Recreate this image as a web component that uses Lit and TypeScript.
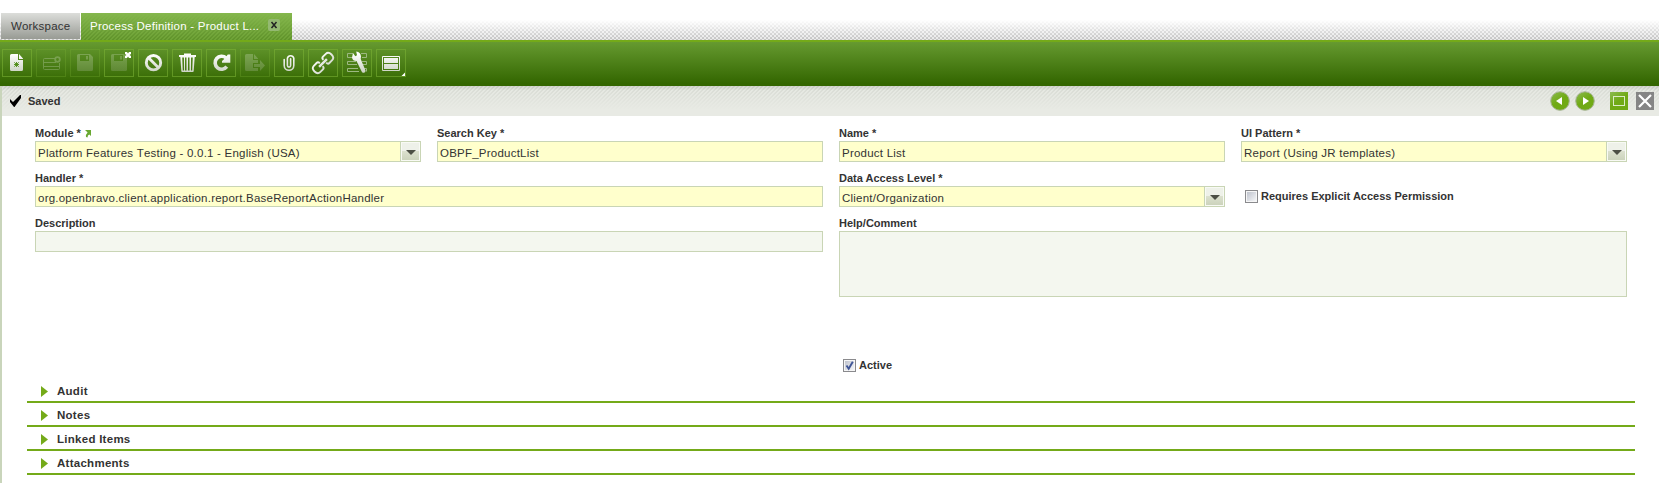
import { LitElement, html, css, svg } from "lit";
import { customElement, property } from "lit/decorators.js";

const DISK = svg`<path fill-rule="evenodd" d="M8.500 5H20l3 3v12.500q0 1.500-1.500 1.500h-13Q7 22 7 20.500v-14Q7 5 8.500 5ZM10 6v6h9V6ZM16 7h2v3.500h-2Z"/>`;
const ICONS: Record<string, unknown> = {
  new: svg`<path fill-rule="evenodd" d="M9.500 5H16v6h5v9.500q0 1.500-1.500 1.500h-10Q8 22 8 20.500v-14Q8 5 9.500 5ZM17 5l4 4.500V10h-4Z"/><path d="M14.500 13v5M12 15.500h5M12.300 13.300l4.400 4.400M12.300 17.700l4.400-4.400" stroke="#4a8a12" stroke-width=".9"/>`,
  row: svg`<g fill="none" stroke="#fff" stroke-width="1"><path d="M19 9.500H8.500q-1 0-1 1v9q0 1 1 1h14q1 0 1-1V14M7.500 13.500H20M7.500 17.500h16"/><circle cx="21.500" cy="10.500" r="2.300" stroke-width="1.800"/></g>`,
  save: DISK,
  saveClose: svg`<g opacity=".2">${DISK}</g><path d="M21 3h2l1 1.500L25 3h2v2l-1.500 1L27 7v2h-2l-1-1.500L23 9h-2V7l1.500-1L21 5Z" fill="#fff"/>`,
  undo: svg`<g fill="none" stroke="url(#g)" stroke-width="2.900"><circle cx="15.500" cy="13.700" r="7.200"/><path d="M10.500 8.700l10 10"/></g>`,
  trash: svg`<path fill-rule="evenodd" d="M12 4.500h7V6h5v2h-1.300l-1 14q0 1-1 1H10.300q-1 0-1-1l-1-14H7V6h5ZM10.200 8.500l.6 13h1.200V8.500ZM13 8.500v13h1.500v-13ZM16 8.500v13h1.500v-13ZM19 8.500v13h1.200l.6-13Z"/>`,
  refresh: svg`<path d="M20.800 17.700A6.500 6.500 0 1 1 20 8.900" fill="none" stroke="url(#g)" stroke-width="3.600"/><path d="M24.300 5.500v8.300H16V12l2.800-2.600 3-3.900Z"/>`,
  export: svg`<path d="M6.500 5H13v6h5v3h-5v5h5v3H6.500Q5 22 5 20.500v-14Q5 5 6.500 5ZM14 5l4 4.500v.5h-4ZM14 15h6v-4l5 5.500-5 5.500v-4h-6Z"/>`,
  clip: svg`<path d="M10.200 10.500v6a4.800 4.800 0 0 0 9.600 0V9.300a3.300 3.300 0 0 0-6.400 0v7.200a1.600 1.600 0 0 0 3.200 0V9.800" fill="none" stroke="url(#g)" stroke-width="1.600" stroke-linecap="round"/>`,
  link: svg`<g transform="rotate(-45 15 14)" fill="none" stroke="url(#g)" stroke-width="1.900"><path d="M12.500 12q0-2.500-2-2.500H6.500Q3 9.500 3 14t3.500 4.500h4q2 0 2-2.500"/><path d="M17.500 12q0-2.500 2-2.500h4Q27 9.500 27 14t-3.500 4.500h-4q-2 0-2-2.500"/><path d="M9.500 14h11" stroke-width="2.400"/></g>`,
  tools: svg`<g fill="none" stroke="#9db882" stroke-width="1"><path d="M11 4.500H5.500v4H11M19 4.500h5.500v4H20M14 12.500H5.500v3H15M20 12.500h4.500v3H21M16 19.500H5.500v3H17M22 19.500h2.500v3"/></g><path d="M11 4l2.300 3.300 1.700-1-.8-3.800q4.400.5 4.800 5l-.3 2.500 4.800 11.500q.3 2-1.500 2.300t-2.200-1L14.500 12q-4 0-4.500-3.500Z"/>`,
  grid: svg`<path d="M6.500 7.500h17v14h-17Z" fill="none" stroke="url(#g)"/><path fill-rule="evenodd" d="M8 9h14v11H8ZM8 14v1h14v-1Z"/><path d="M29 23.500V27h-3.500Z" fill="#fff"/>`,
};

@customElement("ob-tool")
class ObTool extends LitElement {
  @property() icon = "";
  @property({ type: Boolean, reflect: true }) off = false;
  static styles = css`
    :host { display: block; box-sizing: border-box; width: 30px; height: 28px; border: 1px solid rgba(125, 180, 55, .55); }
    :host([off]) { border-color: rgba(125, 180, 55, .28); }
    svg { display: block; margin: -1px; }
    :host([off]) svg { opacity: .22; }
  `;
  render() {
    return html`<svg width="30" height="28" viewBox="0 0 30 28" fill="url(#g)">
      <defs><linearGradient id="g" gradientUnits="userSpaceOnUse" x1="0" y1="5" x2="0" y2="23"><stop stop-color="#fff"/><stop offset="1" stop-color="#ccd3c5"/></linearGradient></defs>
      ${ICONS[this.icon]}</svg>`;
  }
}

@customElement("ob-field")
class ObField extends LitElement {
  @property() label = "";
  @property() value = "";
  @property({ type: Boolean }) required = false;
  @property({ type: Boolean }) picker = false;
  @property({ type: Boolean }) link = false;
  @property({ type: Boolean }) tall = false;
  static styles = css`
    :host { display: block; min-width: 0; }
    .label { display: flex; height: 14px; padding: 1px 0; font: bold 11px/14px "Liberation Sans", Arial, sans-serif; color: #333; white-space: pre; }
    .jump { margin: 4px 0 0 4px; }
    .box { display: flex; box-sizing: border-box; height: 21px; border: 1px solid #c9d5b5; background: #f4f7ef; }
    .req { background: #ffffcc; }
    .tall { height: 66px; }
    .text { flex: 1; padding: 2px 2px 0; font: 11.5px/18px "Liberation Sans", Arial, sans-serif; letter-spacing: .23px; font-kerning: none; color: #333; white-space: nowrap; height: 17px; }
    .pick { box-sizing: border-box; width: 20px; border-left: 1px solid #c9d5b5; background: #f8faf4; padding: 1px; }
    .face { height: 17px; background: linear-gradient(#eef1e9 0 8px, #dce1cf 8px, #ccd3bc); }
    svg { display: block; }
  `;
  render() {
    return html`<div class="label">${this.label}${this.required ? " *" : ""}${this.link
        ? html`<svg class="jump" width="7" height="8" viewBox="0 0 7 8"><path d="M0 0h6v6L4.300 4.400Q2.500 5 2.500 7.500L1 7Q.6 4.500 2.600 2.600Z" fill="#69a832"/></svg>` : ""}</div>
      <div class="box ${this.required ? "req" : ""} ${this.tall ? "tall" : ""}">
        <div class="text">${this.value}</div>
        ${this.picker ? html`<div class="pick"><div class="face"><svg width="17" height="17"><path d="M4 7h10l-5 5Z" fill="#4c4f45"/></svg></div></div>` : ""}
      </div>`;
  }
}

@customElement("ob-check")
class ObCheck extends LitElement {
  @property() label = "";
  @property({ type: Boolean }) checked = false;
  static styles = css`
    :host { display: flex; gap: 3px; font: bold 11px/13px "Liberation Sans", Arial, sans-serif; color: #333; padding-left: 4px; }
    svg { display: block; }
  `;
  render() {
    return html`<svg width="13" height="13"><defs><linearGradient id="c" x2="1" y2="1"><stop stop-color="#bfc3cd"/><stop offset="1" stop-color="#f5f6f8"/></linearGradient></defs>
      <rect x=".5" y=".5" width="12" height="12" fill="#f6f6f6" stroke="#8a8a8d"/><rect x="2" y="2" width="9" height="9" fill="url(#c)"/>
      ${this.checked ? svg`<path d="M3.500 6.500L5.700 9.800 9.800 2.800" fill="none" stroke="#3f5596" stroke-width="1.900"/>` : ""}</svg><span>${this.label}</span>`;
  }
}

@customElement("app-root")
class AppRoot extends LitElement {
  static styles = css`
    :host { display: block; height: 483px; overflow: hidden; background: #fff; font-family: "Liberation Sans", Arial, sans-serif; color: #333; }
    svg { display: block; }
    .strip { height: 27px; display: flex; align-items: flex-start; padding-left: 1px; gap: 1px;
      background: linear-gradient(#fff 25%, rgba(255,255,255,.1) 100%), repeating-conic-gradient(#bcbcbc 0 25%, #e6e6e6 0 50%) 0 0 / 4px 4px; }
    .spacer { height: 13px; }
    .tab { box-sizing: border-box; font-size: 11.5px; letter-spacing: .23px; line-height: 26px; height: 26px; white-space: nowrap; }
    .ws { width: 79px; padding-left: 10px; background: linear-gradient(#dcddda, #989b94); }
    .active { width: 211px; height: 27px; padding: 0 12px 0 9px; display: flex; justify-content: space-between; color: #fff;
      background: linear-gradient(#85b74d, rgba(105,158,48,.75)), repeating-linear-gradient(135deg, #7cac48 0 1.400px, #426f18 1.400px 2.828px); }
    .close { width: 12px; height: 12px; margin-top: 6px; border-radius: 2px; background: #94b972; }
    .bar { box-sizing: border-box; height: 46px; border-top: 2px solid #74aa19; padding: 7px 2px 0; display: flex; gap: 4px; background: linear-gradient(#669a30, #336600 95%); }
    .main { border-left: 2px solid #c9d5bb; height: 397px; }
    .status { box-sizing: border-box; height: 30px; display: flex; align-items: center; padding: 0 0 0 8px; font: bold 11px/30px "Liberation Sans", Arial, sans-serif;
      background: linear-gradient(rgba(190,193,186,.5), rgba(228,231,224,.6) 15%, #e8eae4 80%), repeating-linear-gradient(135deg, #cccfc8 0 1.414px, #e8eae5 1.414px 2.828px); }
    .saved { flex: 1; padding-left: 6px; }
    .nav { display: flex; align-items: center; }
    .form { display: grid; grid-template-columns: repeat(4, 386px); column-gap: 16px; grid-auto-rows: 45px; height: 254px; padding: 9px 0 0 33px; }
    .two { grid-column: span 2; }
    .access { padding-top: 20px; }
    .on { grid-column: 3; height: 13px; padding-top: 9px; }
    .sections { width: 1608px; margin: 0 0 0 25px; }
    .section { box-sizing: border-box; height: 24px; border-bottom: 2px solid #74aa19; display: flex; padding-left: 14px; gap: 9px; font: bold 11.5px/24px "Liberation Sans", Arial, sans-serif; letter-spacing: .27px; }
    .section svg { margin-top: 7px; }
  `;
  render() {
    const tools: [string, boolean][] = [["new", false], ["row", true], ["save", true], ["saveClose", false], ["undo", false], ["trash", false],
      ["refresh", false], ["export", true], ["clip", false], ["link", false], ["tools", false], ["grid", false]];
    const round = (d: string) => svg`<circle cx="10" cy="10" r="9.300" fill="url(#n)" stroke="#a9b59a" stroke-width="1"/><path d=${d} fill="#fff"/>`;
    const defs = svg`<defs><linearGradient id="n" x2=".7" y2="1"><stop stop-color="#8dbb52"/><stop offset=".55" stop-color="#70aa15"/></linearGradient></defs>`;
    return html`
      <div class="spacer"></div>
      <div class="strip">
        <div class="tab ws">Workspace</div>
        <div class="tab active"><span>Process Definition - Product L...</span><span class="close"><svg width="12" height="12"><path d="M3.500 3l5 6M8.500 3l-5 6" stroke="#222" stroke-width="1.500"/></svg></span></div>
      </div>
      <div class="bar">${tools.map(([n, off]) => html`<ob-tool icon=${n} ?off=${off}></ob-tool>`)}</div>
      <div class="main">
        <div class="status">
          <svg width="12" height="12"><path d="M0 4l3 3 7-7h1v3L4.500 12H4L0 7Z" fill="#000"/></svg>
          <span class="saved">Saved</span>
          <div class="nav">
            <svg width="109" height="20" viewBox="0 0 109 20">${defs}
              ${round("M12 6v8l-6-4Z")}
              <g transform="translate(25 0)">${round("M8 6v8l6-4Z")}</g>
              <rect x="60" y="1" width="18" height="18" fill="url(#n)"/><rect x="63.500" y="5.500" width="11" height="9" fill="none" stroke="#dcebc6"/>
              <rect x="86" y="1" width="18" height="18" fill="#858585"/><path d="M89 4l12 12M101 4L89 16" stroke="#fff" stroke-width="2.200"/>
            </svg>
          </div>
        </div>
        <div class="form">
          <ob-field label="Module" required link picker value="Platform Features Testing - 0.0.1 - English (USA)"></ob-field>
          <ob-field label="Search Key" required value="OBPF_ProductList"></ob-field>
          <ob-field label="Name" required value="Product List"></ob-field>
          <ob-field label="UI Pattern" required picker value="Report (Using JR templates)"></ob-field>
          <ob-field class="two" label="Handler" required value="org.openbravo.client.application.report.BaseReportActionHandler"></ob-field>
          <ob-field label="Data Access Level" required picker value="Client/Organization"></ob-field>
          <ob-check class="access" label="Requires Explicit Access Permission"></ob-check>
          <ob-field class="two" label="Description"></ob-field>
          <ob-field class="two" label="Help/Comment" tall></ob-field>
          <span class="two"></span><span class="two"></span>
          <span class="two"></span><span class="two"></span>
          <ob-check class="on" label="Active" checked></ob-check>
        </div>
        <div class="sections">
          ${["Audit", "Notes", "Linked Items", "Attachments"].map((s) => html`<div class="section"><svg width="7" height="11"><path d="M0 0l7 5.500L0 11Z" fill="#74aa19"/></svg>${s}</div>`)}
        </div>
      </div>`;
  }
}
